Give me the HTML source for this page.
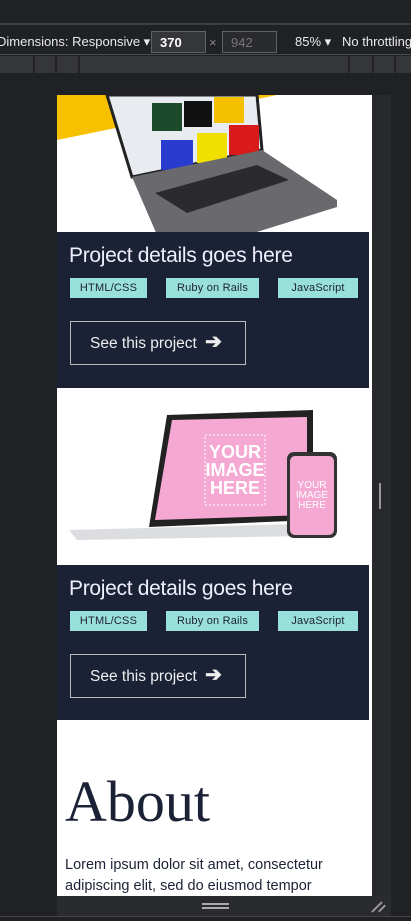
<!DOCTYPE html><html><head><style>
*{margin:0;padding:0;box-sizing:border-box}
body{width:411px;height:921px;background:#202124;font-family:"Liberation Sans",sans-serif;position:relative;overflow:hidden}
.a{position:absolute;white-space:nowrap}
.tb{color:#e8eaed;font-size:13px}
.card{position:absolute;left:57px;width:312px;background:#1c2235}
.card h2{position:absolute;left:12px;top:12px;font-weight:normal;font-size:21px;color:#eef;letter-spacing:-0.3px;white-space:nowrap}
.tag{position:absolute;top:46px;height:20px;background:#99dfdc;color:#1c2235;font-size:11px;text-align:center;line-height:20px;letter-spacing:0.2px}
.btn{position:absolute;left:13px;top:89px;width:176px;height:44px;border:1.5px solid #bbb;color:#eee;font-size:15.5px;line-height:41px;padding-left:19px;white-space:nowrap}
</style></head><body>
<div class="a" style="left:0;top:23px;width:411px;height:2px;background:#3c3d40"></div>
<div class="a tb" style="left:-3px;top:34px">Dimensions: Responsive ▾</div>
<div class="a" style="left:151px;top:31px;width:55px;height:22px;border:1px solid #5f6368;background:#35363a;color:#fff;font-size:13px;font-weight:bold;padding:3px 8px">370</div>
<div class="a" style="left:209px;top:35px;color:#888;font-size:13px">×</div>
<div class="a" style="left:222px;top:31px;width:55px;height:22px;border:1px solid #5f6368;background:#2a2b2e;color:#777;font-size:13px;padding:3px 8px">942</div>
<div class="a tb" style="left:295px;top:34px">85% ▾</div>
<div class="a tb" style="left:342px;top:34px">No throttling</div>
<div class="a" style="left:0;top:54px;width:411px;height:1px;background:#4a4b4e"></div>
<div class="a" style="left:0;top:56px;width:411px;height:17px;background:#35363a"></div>
<div class="a" style="left:33px;top:56px;width:2px;height:17px;background:#222"></div>
<div class="a" style="left:55px;top:56px;width:2px;height:17px;background:#222"></div>
<div class="a" style="left:78px;top:56px;width:2px;height:17px;background:#222"></div>
<div class="a" style="left:348px;top:56px;width:2px;height:17px;background:#222"></div>
<div class="a" style="left:372px;top:56px;width:2px;height:17px;background:#222"></div>
<div class="a" style="left:394px;top:56px;width:2px;height:17px;background:#222"></div>
<div class="a" style="left:372px;top:95px;width:19px;height:821px;background:#28292c"></div>
<div class="a" style="left:379px;top:483px;width:2px;height:26px;background:#999"></div>
<div class="a" style="left:57px;top:95px;width:315px;height:801px;background:#fff;overflow:hidden">
<svg class="a" style="left:0;top:0" width="315" height="140">
<polygon points="0,0 220,0 0,45" fill="#f7c100"/>
<polygon points="50,0 200,0 205,55 75,82" fill="#e8ecf0" stroke="#222" stroke-width="3"/>
<rect x="95" y="8" width="30" height="28" fill="#1c4a2a"/><rect x="127" y="6" width="28" height="26" fill="#111"/><rect x="157" y="2" width="30" height="26" fill="#f5c000"/>
<rect x="104" y="45" width="32" height="30" fill="#2a3bd0"/><rect x="140" y="38" width="30" height="30" fill="#f0e000"/><rect x="172" y="30" width="30" height="30" fill="#d91a1a"/>
<polygon points="75,82 205,55 280,105 280,112 190,140 100,140" fill="#6a6a6e"/>
<polygon points="98,98 200,70 232,85 130,118" fill="#2b2b2e"/>
</svg>
</div>
<div class="card" style="top:232px;height:156px">
<h2>Project details goes here</h2>
<div class="tag" style="left:13px;width:77px">HTML/CSS</div>
<div class="tag" style="left:109px;width:93px">Ruby on Rails</div>
<div class="tag" style="left:221px;width:80px">JavaScript</div>
<div class="btn">See this project <b style="font-size:20px;margin-left:4px">➔</b></div>
</div>
<svg class="a" style="left:57px;top:390px" width="312" height="175">
<polygon points="110,25 256,20 256,130 92,137" fill="#222"/>
<polygon points="115,30 250,27 250,125 98,130" fill="#f4a8d2"/>
<rect x="148" y="45" width="60" height="70" fill="none" stroke="#fff" stroke-dasharray="2,2"/>
<text x="178" y="68" fill="#fff" font-size="18" text-anchor="middle" font-family="Liberation Sans" font-weight="bold">YOUR</text>
<text x="178" y="86" fill="#fff" font-size="18" text-anchor="middle" font-family="Liberation Sans" font-weight="bold">IMAGE</text>
<text x="178" y="104" fill="#fff" font-size="18" text-anchor="middle" font-family="Liberation Sans" font-weight="bold">HERE</text>
<polygon points="12,140 240,134 250,146 20,150" fill="#dcdde0"/>
<rect x="230" y="62" width="50" height="86" rx="7" fill="#333"/>
<rect x="233" y="66" width="44" height="79" rx="5" fill="#f4a8d2"/>
<text x="255" y="98" fill="#fff" font-size="10" text-anchor="middle" font-family="Liberation Sans">YOUR</text>
<text x="255" y="108" fill="#fff" font-size="10" text-anchor="middle" font-family="Liberation Sans">IMAGE</text>
<text x="255" y="118" fill="#fff" font-size="10" text-anchor="middle" font-family="Liberation Sans">HERE</text>
</svg>
<div class="card" style="top:565px;height:155px">
<h2>Project details goes here</h2>
<div class="tag" style="left:13px;width:77px">HTML/CSS</div>
<div class="tag" style="left:109px;width:93px">Ruby on Rails</div>
<div class="tag" style="left:221px;width:80px">JavaScript</div>
<div class="btn">See this project <b style="font-size:20px;margin-left:4px">➔</b></div>
</div>
<div class="a" style="left:65px;top:768px;font-family:'Liberation Serif',serif;font-size:58px;color:#1c2235">About</div>
<div class="a" style="left:65px;top:855px;width:300px;font-size:14.5px;line-height:21px;color:#1c2235;white-space:normal">Lorem ipsum dolor sit amet, consectetur adipiscing elit, sed do eiusmod tempor</div>
<div class="a" style="left:57px;top:896px;width:334px;height:20px;background:#2a2b2e"></div>
<div class="a" style="left:202px;top:903px;width:27px;height:2px;background:#aaa"></div>
<div class="a" style="left:202px;top:907px;width:27px;height:2px;background:#aaa"></div>
<div class="a" style="left:376px;top:900px;width:2px;height:14px;background:#999;transform:rotate(45deg)"></div>
<div class="a" style="left:381px;top:904px;width:2px;height:9px;background:#999;transform:rotate(45deg)"></div>
<div class="a" style="left:0;top:916px;width:411px;height:1px;background:#444"></div>
</body></html>
